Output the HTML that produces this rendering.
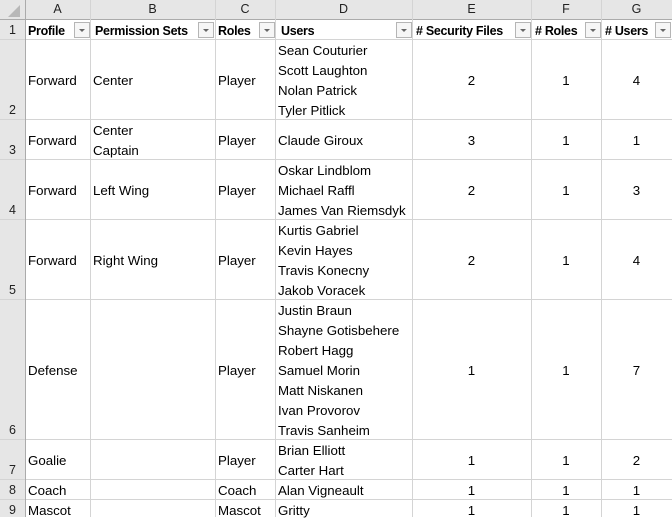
<!DOCTYPE html>
<html><head><meta charset="utf-8"><style>
body{margin:0;width:672px;height:517px;overflow:hidden;background:#fff;font-family:"Liberation Sans",sans-serif;font-size:13.3px;color:#000;position:relative}
.a{position:absolute}
.h{position:absolute;left:0;width:672px;height:1px;background:#d4d4d4}
.v{position:absolute;top:0;width:1px;height:517px;background:#d4d4d4}
.t{position:absolute;line-height:20px;white-space:nowrap;margin-top:1px}
.c{text-align:center}
.hd{position:absolute;top:0;height:19px;line-height:19px;text-align:center;color:#222;font-size:12.5px}
.rn{position:absolute;left:0;width:25px;text-align:center;color:#222;line-height:18px;font-size:12.5px}
.b{font-weight:bold;font-size:12.5px;letter-spacing:-0.3px}
.f{position:absolute;top:22px;width:14px;height:14px;border:1px solid #b5b5b5;background:#f6f6f6}
.f:after{content:"";position:absolute;left:4px;top:6px;border-left:3px solid transparent;border-right:3px solid transparent;border-top:3px solid #666}
</style></head><body>
<div class="a" style="left:0;top:0;width:672px;height:19px;background:#e6e6e6"></div>
<div class="a" style="left:0;top:0;width:25px;height:517px;background:#e6e6e6"></div>
<div class="a" style="left:8px;top:5px;width:0;height:0;border-left:12px solid transparent;border-bottom:12px solid #b8b8b8"></div>
<div class="h" style="top:19px;background:#ababab"></div>
<div class="h" style="top:39px"></div>
<div class="h" style="top:119px"></div>
<div class="h" style="top:159px"></div>
<div class="h" style="top:219px"></div>
<div class="h" style="top:299px"></div>
<div class="h" style="top:439px"></div>
<div class="h" style="top:479px"></div>
<div class="h" style="top:499px"></div>
<div class="v" style="left:25px;background:#ababab"></div>
<div class="v" style="left:90px"></div>
<div class="v" style="left:215px"></div>
<div class="v" style="left:275px"></div>
<div class="v" style="left:412px"></div>
<div class="v" style="left:531px"></div>
<div class="v" style="left:601px"></div>

<div class="hd" style="left:25px;width:65px">A</div>
<div class="hd" style="left:90px;width:125px">B</div>
<div class="hd" style="left:215px;width:60px">C</div>
<div class="hd" style="left:275px;width:137px">D</div>
<div class="hd" style="left:412px;width:119px">E</div>
<div class="hd" style="left:531px;width:70px">F</div>
<div class="hd" style="left:601px;width:71px">G</div>

<div class="rn" style="top:21px">1</div>
<div class="rn" style="top:101px">2</div>
<div class="rn" style="top:141px">3</div>
<div class="rn" style="top:201px">4</div>
<div class="rn" style="top:281px">5</div>
<div class="rn" style="top:421px">6</div>
<div class="rn" style="top:461px">7</div>
<div class="rn" style="top:481px">8</div>
<div class="rn" style="top:501px">9</div>

<div class="t b" style="left:28px;top:20px">Profile</div><div class="f" style="left:74px"></div>
<div class="t b" style="left:95px;top:20px">Permission Sets</div><div class="f" style="left:198px"></div>
<div class="t b" style="left:218px;top:20px">Roles</div><div class="f" style="left:259px"></div>
<div class="t b" style="left:281px;top:20px">Users</div><div class="f" style="left:396px"></div>
<div class="t b" style="left:416px;top:20px">#&nbsp;Security Files</div><div class="f" style="left:515px"></div>
<div class="t b" style="left:535px;top:20px">#&nbsp;Roles</div><div class="f" style="left:585px"></div>
<div class="t b" style="left:605px;top:20px">#&nbsp;Users</div><div class="f" style="left:655px"></div>

<div class="t" style="left:28px;top:70px">Forward</div>
<div class="t" style="left:93px;top:70px">Center</div>
<div class="t" style="left:218px;top:70px">Player</div>
<div class="t" style="left:278px;top:40px">Sean Couturier<br>Scott Laughton<br>Nolan Patrick<br>Tyler Pitlick</div>
<div class="t c" style="left:412px;width:119px;top:70px">2</div>
<div class="t c" style="left:531px;width:70px;top:70px">1</div>
<div class="t c" style="left:601px;width:71px;top:70px">4</div>

<div class="t" style="left:28px;top:130px">Forward</div>
<div class="t" style="left:93px;top:120px">Center<br>Captain</div>
<div class="t" style="left:218px;top:130px">Player</div>
<div class="t" style="left:278px;top:130px">Claude Giroux</div>
<div class="t c" style="left:412px;width:119px;top:130px">3</div>
<div class="t c" style="left:531px;width:70px;top:130px">1</div>
<div class="t c" style="left:601px;width:71px;top:130px">1</div>

<div class="t" style="left:28px;top:180px">Forward</div>
<div class="t" style="left:93px;top:180px">Left Wing</div>
<div class="t" style="left:218px;top:180px">Player</div>
<div class="t" style="left:278px;top:160px">Oskar Lindblom<br>Michael Raffl<br>James Van Riemsdyk</div>
<div class="t c" style="left:412px;width:119px;top:180px">2</div>
<div class="t c" style="left:531px;width:70px;top:180px">1</div>
<div class="t c" style="left:601px;width:71px;top:180px">3</div>

<div class="t" style="left:28px;top:250px">Forward</div>
<div class="t" style="left:93px;top:250px">Right Wing</div>
<div class="t" style="left:218px;top:250px">Player</div>
<div class="t" style="left:278px;top:220px">Kurtis Gabriel<br>Kevin Hayes<br>Travis Konecny<br>Jakob Voracek</div>
<div class="t c" style="left:412px;width:119px;top:250px">2</div>
<div class="t c" style="left:531px;width:70px;top:250px">1</div>
<div class="t c" style="left:601px;width:71px;top:250px">4</div>

<div class="t" style="left:28px;top:360px">Defense</div>
<div class="t" style="left:218px;top:360px">Player</div>
<div class="t" style="left:278px;top:300px">Justin Braun<br>Shayne Gotisbehere<br>Robert Hagg<br>Samuel Morin<br>Matt Niskanen<br>Ivan Provorov<br>Travis Sanheim</div>
<div class="t c" style="left:412px;width:119px;top:360px">1</div>
<div class="t c" style="left:531px;width:70px;top:360px">1</div>
<div class="t c" style="left:601px;width:71px;top:360px">7</div>

<div class="t" style="left:28px;top:450px">Goalie</div>
<div class="t" style="left:218px;top:450px">Player</div>
<div class="t" style="left:278px;top:440px">Brian Elliott<br>Carter Hart</div>
<div class="t c" style="left:412px;width:119px;top:450px">1</div>
<div class="t c" style="left:531px;width:70px;top:450px">1</div>
<div class="t c" style="left:601px;width:71px;top:450px">2</div>

<div class="t" style="left:28px;top:480px">Coach</div>
<div class="t" style="left:218px;top:480px">Coach</div>
<div class="t" style="left:278px;top:480px">Alan Vigneault</div>
<div class="t c" style="left:412px;width:119px;top:480px">1</div>
<div class="t c" style="left:531px;width:70px;top:480px">1</div>
<div class="t c" style="left:601px;width:71px;top:480px">1</div>

<div class="t" style="left:28px;top:500px">Mascot</div>
<div class="t" style="left:218px;top:500px">Mascot</div>
<div class="t" style="left:278px;top:500px">Gritty</div>
<div class="t c" style="left:412px;width:119px;top:500px">1</div>
<div class="t c" style="left:531px;width:70px;top:500px">1</div>
<div class="t c" style="left:601px;width:71px;top:500px">1</div>
</body></html>
